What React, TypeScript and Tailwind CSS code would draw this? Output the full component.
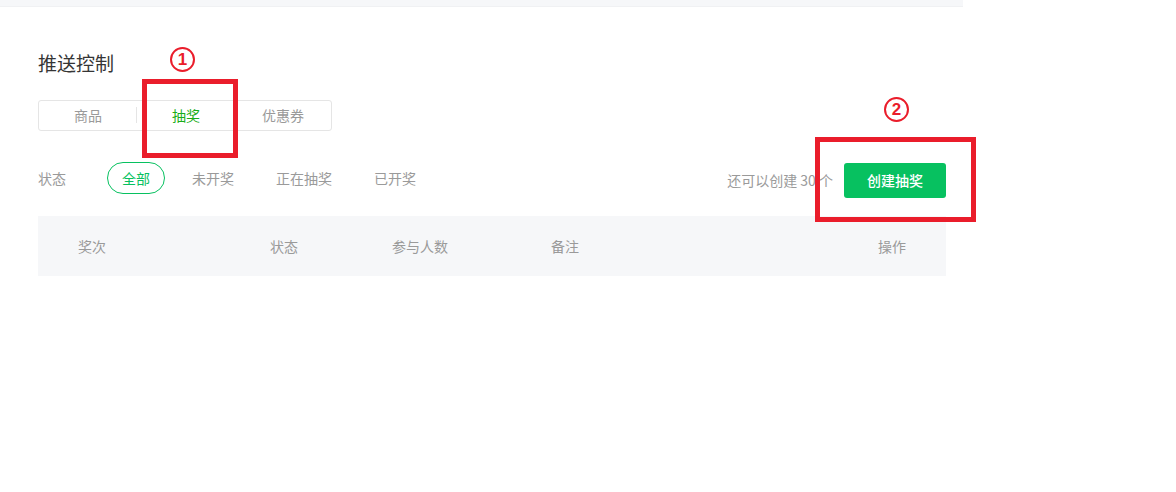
const font = { fontFamily: '"Noto Sans CJK SC", "Noto Sans", sans-serif' };

const statusFilters = ["全部", "未开奖", "正在抽奖", "已开奖"];

function Marker({ n, className }: { n: string; className: string }) {
  return (
    <div
      className={`absolute w-[25px] h-[25px] rounded-full border-2 border-[#ea1d2b] flex items-center justify-center text-[#ea1d2b] text-[17px] font-bold leading-none ${className}`}
      style={{ fontFamily: '"Liberation Sans", Arial, sans-serif' }}
    >
      {n}
    </div>
  );
}

export default function App() {
  return (
    <main className="relative w-[1176px] h-[492px] bg-white overflow-hidden" style={font}>
      {/* top strip */}
      <div className="w-[963px] h-[7px] bg-[#f6f7f9] border-b border-[#f0f1f3]" />

      <section className="ml-[38px] w-[908px]">
        <h1 className="mt-[42px] text-[19px] leading-[28px] text-[#353535]">推送控制</h1>

        {/* tabs */}
        <div className="mt-[23px] flex w-[294px] h-[31px] border border-[#e5e5e5] rounded-[3px] text-[14px] text-[#9a9a9a]">
          <div className="w-[98px] flex items-center justify-center relative">
            商品
            <span className="absolute right-0 top-[6px] h-[16px] w-px bg-[#e5e5e5]" />
          </div>
          <div className="w-[98px] flex items-center justify-center text-[#1aad19]">抽奖</div>
          <div className="flex-1 flex items-center justify-center">优惠券</div>
        </div>

        {/* status filter + create */}
        <div className="mt-[31px] flex justify-between items-start">
          <div className="flex items-center h-[32px] text-[14px] text-[#9a9a9a]">
            <span className="w-[69px]">状态</span>
            <div className="flex gap-[12px]">
              {statusFilters.map((s, i) => (
                <span
                  key={s}
                  className={
                    i === 0
                      ? "h-[32px] px-[14px] flex items-center rounded-full border border-[#07c160] text-[#07c160]"
                      : "h-[32px] px-[15px] flex items-center"
                  }
                >
                  {s}
                </span>
              ))}
            </div>
          </div>

          <div className="mt-[1px] flex items-center gap-[11px]">
            <span className="text-[14px] text-[#9a9a9a]">还可以创建 30 个</span>
            <button className="w-[102px] h-[35px] rounded-[3px] bg-[#07c160] text-white text-[14px] font-medium">
              创建抽奖
            </button>
          </div>
        </div>

        {/* table header */}
        <div className="mt-[18px] h-[60px] bg-[#f6f7f9] flex items-center px-[40px] text-[14px] text-[#9a9a9a]">
          <span className="w-[192px]">奖次</span>
          <span className="w-[122px]">状态</span>
          <span className="w-[159px]">参与人数</span>
          <span className="flex-1">备注</span>
          <span>操作</span>
        </div>
      </section>

      {/* annotations */}
      <div className="absolute left-[142px] top-[79px] w-[96px] h-[79px] border-[5px] border-[#ea1d2b]" />
      <Marker n="1" className="left-[170px] top-[47px]" />
      <div className="absolute left-[815px] top-[137px] w-[161px] h-[85px] border-[5px] border-[#ea1d2b]" />
      <Marker n="2" className="left-[884px] top-[97px]" />
    </main>
  );
}
